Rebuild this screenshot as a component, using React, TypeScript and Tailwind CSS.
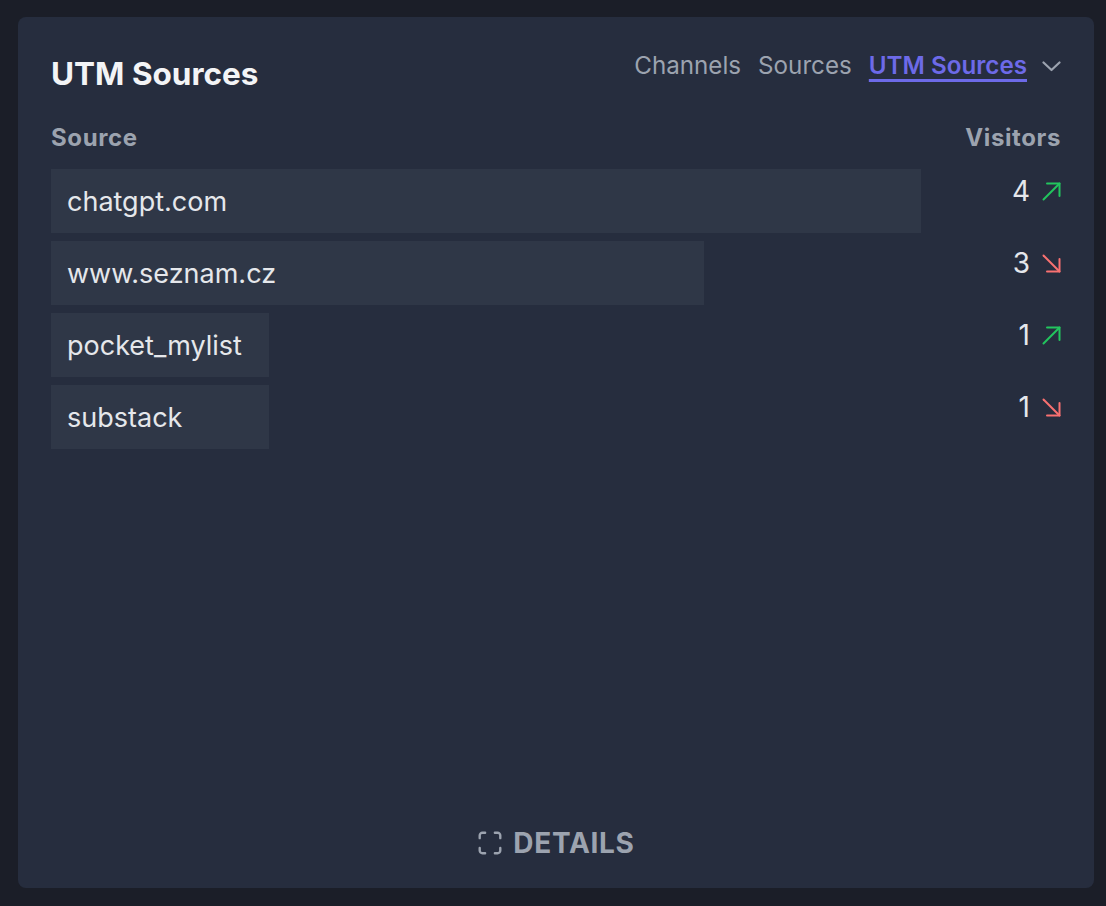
const ROWS = [
  { name: 'chatgpt.com', visitors: 4, up: true },
  { name: 'www.seznam.cz', visitors: 3, up: false },
  { name: 'pocket_mylist', visitors: 1, up: true },
  { name: 'substack', visitors: 1, up: false },
];

const MAX = Math.max(...ROWS.map((r) => r.visitors));

function Trend({ up }: { up: boolean }) {
  return up ? (
    <svg width="19" height="19" viewBox="0 0 19 19" fill="none" stroke="#22c55e" strokeWidth="2" strokeLinecap="round" strokeLinejoin="round">
      <path d="M1.5 17.5 17.5 1.5" />
      <path d="M5 1.5h12.5V14" />
    </svg>
  ) : (
    <svg width="19" height="19" viewBox="0 0 19 19" fill="none" stroke="#f87171" strokeWidth="2" strokeLinecap="round" strokeLinejoin="round">
      <path d="M1.5 1.5 17.5 17.5" />
      <path d="M17.5 5v12.5H5" />
    </svg>
  );
}

function Chevron() {
  return (
    <svg width="19" height="11" viewBox="0 0 19 11" fill="none" stroke="currentColor" strokeWidth="2.2" strokeLinecap="round" strokeLinejoin="round">
      <path d="M1.5 1.5 9.5 9 17.5 1.5" />
    </svg>
  );
}

function DetailsIcon() {
  return (
    <svg width="26" height="26" viewBox="0 0 24 24" fill="none" stroke="currentColor" strokeWidth="2.2" strokeLinecap="round" strokeLinejoin="round">
      <path d="M2.5 7.5V5a2.5 2.5 0 0 1 2.5-2.5h2.5" />
      <path d="M16.5 2.5H19a2.5 2.5 0 0 1 2.5 2.5v2.5" />
      <path d="M21.5 16.5V19a2.5 2.5 0 0 1-2.5 2.5h-2.5" />
      <path d="M7.5 21.5H5A2.5 2.5 0 0 1 2.5 19v-2.5" />
    </svg>
  );
}

export default function App() {
  return (
    <div className="min-h-screen bg-[#1b1e28] pl-[18px] pt-[17px] font-['Inter',sans-serif]">
      <div className="flex h-[871px] w-[1076px] flex-col rounded-lg bg-[#262d3e] px-[33px] pt-[40px]">
        {/* header */}
        <div className="flex items-start justify-between">
          <h3 className="text-[31.5px] font-bold leading-[34px] text-[#f3f4f6]">UTM Sources</h3>
          <div className="-mt-[5px] flex items-center gap-[17px] text-[24.2px] leading-[28px] text-[#9ca3af]">
            <span>Channels</span>
            <span>Sources</span>
            <span className="font-semibold text-[#6d6ae8] underline decoration-[3px] underline-offset-[5px]">UTM Sources</span>
            <span className="-ml-[2px] text-[#9ca3af]">
              <Chevron />
            </span>
          </div>
        </div>

        {/* column headers */}
        <div className="mt-[34px] flex justify-between text-[24px] font-bold leading-[26px] tracking-wide text-[#9ca3af]">
          <span>Source</span>
          <span>Visitors</span>
        </div>

        {/* rows */}
        <div className="mt-[18px] flex flex-col gap-[8px]">
          {ROWS.map((r) => (
            <div key={r.name} className="flex h-[64px]">
              <div className="relative w-[870px]">
                <div
                  className="absolute inset-y-0 left-0 bg-[#2f3747]"
                  style={{ width: `${(r.visitors / MAX) * 100}%` }}
                />
                <span className="relative flex h-full items-center whitespace-nowrap pl-[16px] pt-[2px] text-[27px] text-[#e5e7eb]">
                  {r.name}
                </span>
              </div>
              <div className="flex flex-1 items-start justify-end gap-[12px] pt-[6px]">
                <span className="text-[28px] leading-[32px] text-[#e5e7eb]">{r.visitors}</span>
                <span className="mt-[7px]">
                  <Trend up={r.up} />
                </span>
              </div>
            </div>
          ))}
        </div>

        <div className="flex-1" />

        {/* footer */}
        <div className="flex items-center justify-center gap-[10px] pb-[30px] text-[#9ca3af]">
          <DetailsIcon />
          <span className="text-[28px] font-bold leading-[30px] tracking-wide">DETAILS</span>
        </div>
      </div>
    </div>
  );
}
